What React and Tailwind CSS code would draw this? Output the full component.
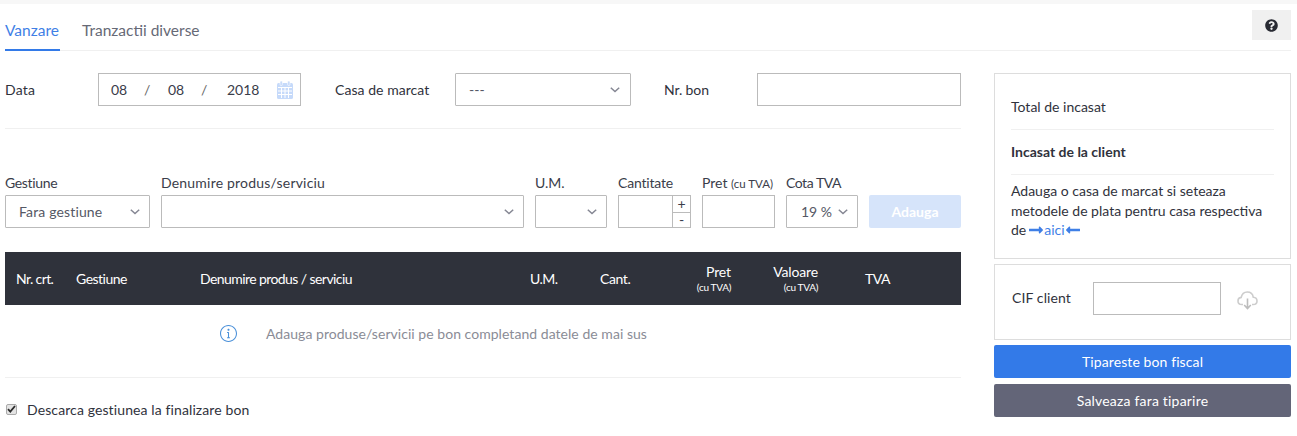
import React from "react";
import { FaQuestionCircle, FaLongArrowAltRight, FaLongArrowAltLeft } from "react-icons/fa";
import { SlInfo } from "react-icons/sl";

const Chevron = () => (
  <svg width="10" height="6" viewBox="0 0 10 6" fill="none" className="shrink-0 mt-[1px]">
    <path d="M0.8 0.8 L5 4.6 L9.2 0.8" stroke="#858793" strokeWidth="1.5" />
  </svg>
);

const Calendar = () => (
  <svg width="16" height="18" viewBox="0 0 16 18" className="shrink-0">
    <rect x="0" y="2" width="16" height="16" rx="1.5" fill="#c6dafa" />
    <rect x="3" y="0" width="2.4" height="4.5" rx="1" fill="#c6dafa" stroke="#fff" strokeWidth="0.6" />
    <rect x="10.6" y="0" width="2.4" height="4.5" rx="1" fill="#c6dafa" stroke="#fff" strokeWidth="0.6" />
    <path d="M1 6.5H15M1 10H15M1 13.5H15M4.5 6V17M8 6V17M11.5 6V17" stroke="#fff" strokeWidth="1" />
  </svg>
);

const Cloud = () => (
  <svg width="21" height="19" viewBox="0 0 21 19" fill="none" className="shrink-0">
    <path d="M6 13.5H4.8C2.6 13.5 1 11.9 1 9.9C1 8 2.4 6.6 4.2 6.4C4.8 3.3 7.2 1 10.3 1C13.4 1 15.8 3.2 16.3 6.3C18.3 6.5 20 7.9 20 9.9C20 11.9 18.4 13.5 16.2 13.5H15" stroke="#cdcdcd" strokeWidth="1.6" />
    <path d="M10.5 7.5V17M7.2 14L10.5 17.5L13.8 14" stroke="#bdbdbd" strokeWidth="1.6" />
  </svg>
);

const Field = ({ label, className = "", labelClass = "", children }) => (
  <div className={`flex flex-col ${className}`}>
    <label className={`h-[22px] leading-[20px] whitespace-nowrap text-[#3a3d4a] ${labelClass}`}>{label}</label>
    {children}
  </div>
);

const Select = ({ value, className = "", pad = "pl-[13px] pr-[9px]", textClass = "" }) => (
  <div className={`h-[33px] border border-[#bbbbbb] rounded-[1px] flex items-center justify-between bg-white ${pad} ${className}`}>
    <span className={`text-[#555865] ${textClass}`}>{value}</span>
    <Chevron />
  </div>
);

const Head = ({ className, children }) => <div className={`absolute ${className}`}>{children}</div>;

export default function App() {
  return (
    <div className="w-[1297px] h-[436px] overflow-hidden bg-white text-[14px] text-[#30323c] font-['Lato','Noto_Sans',sans-serif]">
      <div className="h-1 bg-[#f7f7f7]" />
      <div className="ml-[5px] mr-[6px] h-[47px] border-b border-[#f0f0f0] flex justify-between">
        <div className="flex gap-[22px] text-[15.5px]">
          <div className="h-[47px] w-[55px] border-b-2 border-[#337ae8] text-[#3f7fe6] pt-[16px] leading-[20px] whitespace-nowrap">Vanzare</div>
          <div className="pt-[16px] leading-[20px] text-[#666976] whitespace-nowrap">Tranzactii diverse</div>
        </div>
        <div className="mt-[6px] w-[39px] h-[30px] bg-[#f0f0f0] flex items-center justify-center">
          <FaQuestionCircle className="text-[13px] text-[#282a33]" />
        </div>
      </div>

      <div className="flex pl-[5px] pr-[6px] pt-[22px] gap-[33px]">
        <div className="w-[956px]">
          <div className="flex items-center h-[33px]">
            <div className="w-[93px] tracking-[0.2px]">Data</div>
            <div className="w-[203px] h-[33px] border border-[#bbbbbb] flex items-center pl-[12px] text-[#3a3d4a]">
              <span className="w-[33px]">08</span>
              <span className="w-[24px] text-[#666]">/</span>
              <span className="w-[33px]">08</span>
              <span className="w-[26px] text-[#666]">/</span>
              <span className="w-[50px]">2018</span>
              <Calendar />
            </div>
            <div className="ml-[34px] w-[120px] whitespace-nowrap tracking-[0.05px]">Casa de marcat</div>
            <Select value="---" className="w-[176px]" pad="pl-[13px] pr-[10px]" />
            <div className="ml-[33px] w-[93px] tracking-[-0.1px]">Nr. bon</div>
            <div className="w-[204px] h-[33px] border border-[#bbbbbb]" />
          </div>
          <div className="h-px bg-[#f0f0f0] mt-[22px]" />

          <div className="flex mt-[44px] items-end">
            <Field label="Gestiune" labelClass="tracking-[-0.35px]" className="w-[145px]"><Select value="Fara gestiune" textClass="tracking-[0.15px]" /></Field>
            <Field label="Denumire produs/serviciu" labelClass="tracking-[0.2px]" className="w-[363px] ml-[11px]"><Select value="" /></Field>
            <Field label="U.M." className="w-[72px] ml-[11px]"><Select value="" /></Field>
            <Field label="Cantitate" labelClass="tracking-[-0.2px]" className="w-[73px] ml-[11px]">
              <div className="h-[33px] border border-[#bbbbbb] flex">
                <div className="flex-1" />
                <div className="w-[18px] border-l border-[#bbbbbb] flex flex-col text-center text-[#3a3d4a] leading-[16px]">
                  <div className="h-[17px] border-b border-[#bbbbbb]">+</div>
                  <div className="flex-1 leading-[14px]">-</div>
                </div>
              </div>
            </Field>
            <Field label={<>Pret <span className="text-[11.5px]">(cu TVA)</span></>} className="w-[73px] ml-[11px]">
              <div className="h-[33px] border border-[#bbbbbb]" />
            </Field>
            <Field label="Cota TVA" labelClass="tracking-[-0.45px]" className="w-[72px] ml-[11px]"><Select value="19 %" pad="pl-[14px] pr-[9px]" /></Field>
            <button className="ml-[11px] w-[92px] h-[33px] rounded-[2px] bg-[#d6e4fa] text-white font-bold">Adauga</button>
          </div>

          <div className="relative h-[53px] mt-[24px] bg-[#2f323b] text-white">
            <Head className="left-[11px] top-[16px] tracking-[-0.6px]">Nr. crt.</Head>
            <Head className="left-[71px] top-[16px] tracking-[-0.5px]">Gestiune</Head>
            <Head className="left-[195px] top-[16px] tracking-[-0.58px]">Denumire produs / serviciu</Head>
            <Head className="left-[525px] top-[16px] tracking-[-0.5px]">U.M.</Head>
            <Head className="left-[595px] top-[16px] tracking-[-0.4px]">Cant.</Head>
            <Head className="right-[230px] top-[10px] text-right leading-[20px] tracking-[-0.1px]">Pret<div className="text-[10px] leading-[11px] tracking-[-0.3px]">(cu TVA)</div></Head>
            <Head className="right-[143px] top-[10px] text-right leading-[20px] tracking-[-0.15px]">Valoare<div className="text-[10px] leading-[11px] tracking-[-0.3px]">(cu TVA)</div></Head>
            <Head className="left-[860px] top-[16px] tracking-[-0.5px]">TVA</Head>
          </div>

          <div className="flex items-center h-[56px] pl-[215px]">
            <SlInfo className="text-[17px] text-[#4a90d9]" />
            <span className="ml-[29px] text-[#8a8c96] tracking-[0.04px]">Adauga produse/servicii pe bon completand datele de mai sus</span>
          </div>
          <div className="h-px bg-[#f0f0f0] mt-[16px]" />
          <div className="flex items-center mt-[22px] h-[18px]">
            <span className="ml-[1px] w-[11px] h-[11px] rounded-[2px] bg-[#e4e4e4] border border-[#aaaaaa] flex items-center justify-center">
              <svg width="9" height="8" viewBox="0 0 9 8" fill="none"><path d="M1 4.2L3.3 6.6L8 1" stroke="#2b2b2b" strokeWidth="1.8" /></svg>
            </span>
            <span className="ml-[10px] tracking-[0.11px]">Descarca gestiunea la finalizare bon</span>
          </div>
        </div>

        <div className="w-[297px]">
          <div className="h-[186px] border border-[#dddddd] px-[16px]">
            <div className="h-[56px] pt-[23px] leading-[20px] border-b border-[#f0f0f0]">Total de incasat</div>
            <div className="h-[45px] pt-[12px] leading-[20px] font-bold border-b border-[#f0f0f0]">Incasat de la client</div>
            <div className="pt-[6px] leading-[20px]">Adauga o casa de marcat si seteaza metodele de plata pentru casa respectiva</div>
            <div className="flex items-center -mt-[1px] h-[20px] leading-[20px]">
              <span>de</span>
              <FaLongArrowAltRight className="ml-[2px] text-[16px] text-[#3f7fe6]" />
              <span className="text-[#3f7fe6]">aici</span>
              <FaLongArrowAltLeft className="text-[16px] text-[#3f7fe6]" />
            </div>
          </div>
          <div className="h-[76px] mt-[5px] border border-[#dddddd] pl-[17px] flex items-start pt-[17px]">
            <div className="w-[81px] h-[31px] flex items-center tracking-[0.1px]">CIF client</div>
            <div className="w-[128px] h-[33px] border border-[#bbbbbb]" />
            <div className="ml-[16px] mt-[9px]"><Cloud /></div>
          </div>
          <button className="block w-full h-[33px] mt-[5px] rounded-[2px] bg-[#337ae8] text-white tracking-[0.1px]">Tipareste bon fiscal</button>
          <button className="block w-full h-[33px] mt-[6px] rounded-[2px] bg-[#636578] text-white tracking-[0.2px]">Salveaza fara tiparire</button>
        </div>
      </div>
    </div>
  );
}
